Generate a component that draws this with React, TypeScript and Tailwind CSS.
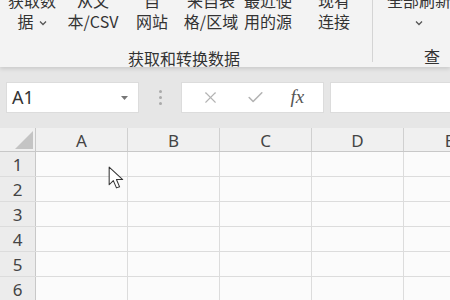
import { X, Check } from "lucide-react"

const cols = ["A", "B", "C", "D", "E"]
const rows = [1, 2, 3, 4, 5, 6]

function RibbonItem({ w, top, bottom, chevron }: { w: string; top: string; bottom: string; chevron?: boolean }) {
    return (
        <div className={`${w} shrink-0 flex flex-col items-center leading-[21px]`}>
            <span className="whitespace-nowrap">{top}</span>
            <span className="whitespace-nowrap flex items-center gap-[5px]">
                {bottom}
                {chevron && <ChevronSmall />}
            </span>
        </div>
    )
}

function ChevronSmall() {
    return (
        <svg width="8" height="6" viewBox="0 0 8 6" className="mt-[2px]">
            <path d="M1 1.5 L4 4.5 L7 1.5" fill="none" stroke="#555" strokeWidth="1.3" />
        </svg>
    )
}

export default function App() {
    return (
        <main
            className="w-[450px] h-[300px] overflow-hidden bg-[#e6e6e6] flex flex-col text-[#333]"
            style={{ fontFamily: '"Noto Sans CJK SC", "Noto Sans", sans-serif' }}
        >
            {/* ribbon */}
            <div className="h-[67px] shrink-0 bg-[#f3f3f3] overflow-hidden shadow-[0_2px_4px_rgba(0,0,0,0.12)] relative z-10 text-[16px]">
                <div className="flex mt-[-10px]">
                    <div className="flex flex-col w-[372px] shrink-0">
                        <div className="flex">
                            <RibbonItem w="w-[64px]" top="获取数" bottom="据" chevron />
                            <RibbonItem w="w-[58px]" top="从文" bottom="本/CSV" />
                            <RibbonItem w="w-[60px]" top="自" bottom="网站" />
                            <RibbonItem w="w-[58px]" top="来自表" bottom="格/区域" />
                            <RibbonItem w="w-[56px]" top="最近使" bottom="用的源" />
                            <RibbonItem w="w-[76px]" top="现有" bottom="连接" />
                        </div>
                        <div className="mt-[16px] pr-[4px] text-center leading-[20px]">获取和转换数据</div>
                    </div>
                    <div className="w-px h-[72px] bg-[#d4d4d4] shrink-0" />
                    <div className="flex flex-col items-center w-[92px] shrink-0 leading-[21px]">
                        <span className="whitespace-nowrap">全部刷新</span>
                        <span className="h-[21px] flex items-center"><ChevronSmall /></span>
                        <span className="mt-[14px] self-end mr-[25px] leading-[20px]">查</span>
                    </div>
                </div>
            </div>

            {/* formula bar */}
            <div className="flex items-center h-[61px] shrink-0 pt-[15px] pb-[15px]">
                <div className="ml-[6px] w-[133px] h-[31px] bg-white border border-[#dcdcdc] flex items-center justify-between pl-[5px] pr-[10px]">
                    <span className="text-[18px] text-[#333]" style={{ fontFamily: '"Noto Sans", sans-serif' }}>A1</span>
                    <svg width="7" height="4" viewBox="0 0 7 4"><path d="M0 0 H7 L3.5 4 Z" fill="#777" /></svg>
                </div>
                <div className="w-[42px] flex flex-col items-center gap-[3px]">
                    <span className="w-[3px] h-[3px] rounded-full bg-[#aaa]" />
                    <span className="w-[3px] h-[3px] rounded-full bg-[#aaa]" />
                    <span className="w-[3px] h-[3px] rounded-full bg-[#aaa]" />
                </div>
                <div className="w-[143px] h-[31px] bg-white border border-[#dcdcdc] flex items-center justify-around px-[6px]">
                    <X size={19} strokeWidth={1.4} color="#b3b3b3" />
                    <Check size={19} strokeWidth={2} color="#b3b3b3" />
                    <span className="italic text-[19px] text-[#555]" style={{ fontFamily: '"Liberation Serif", serif' }}>fx</span>
                </div>
                <div className="ml-[6px] flex-1 h-[31px] bg-white border border-[#dcdcdc] border-r-0" />
            </div>

            {/* grid */}
            <div className="flex-1 flex flex-col bg-[#fbfbfb] text-[17px] text-[#444]" style={{ fontFamily: '"Noto Sans", sans-serif' }}>
                <div className="flex h-[24px] bg-[#f0f0f0] border-b border-[#c8c8c8] shrink-0">
                    <div className="w-[36px] shrink-0 border-r border-[#c8c8c8] flex items-end justify-end pr-[2px] pb-[2px]">
                        <svg width="18" height="18" viewBox="0 0 18 18"><path d="M18 0 V18 H0 Z" fill="#c4c4c4" /></svg>
                    </div>
                    {cols.map((c) => (
                        <div key={c} className="w-[92px] shrink-0 border-r border-[#d0d0d0] flex items-center justify-center leading-none pt-[2px]">
                            {c}
                        </div>
                    ))}
                </div>
                {rows.map((r) => (
                    <div key={r} className="flex h-[25px] shrink-0 border-b border-[#dcdcdc]">
                        <div className="w-[36px] shrink-0 bg-[#ececec] border-r border-[#c8c8c8] flex items-center justify-center leading-none">
                            {r}
                        </div>
                        {cols.map((c) => (
                            <div key={c} className="w-[92px] shrink-0 border-r border-[#dcdcdc] relative">
                                {r === 1 && c === "A" && (
                                    <svg width="19" height="25" viewBox="0 0 18 24" className="absolute left-[72px] top-[14px]">
                                        <path d="M1 1 L1 18 L5 14 L8 21 L11 20 L8 13 L14 13 Z" fill="white" stroke="#333" strokeWidth="1" strokeLinejoin="round" />
                                    </svg>
                                )}
                            </div>
                        ))}
                    </div>
                ))}
            </div>
        </main>
    )
}
